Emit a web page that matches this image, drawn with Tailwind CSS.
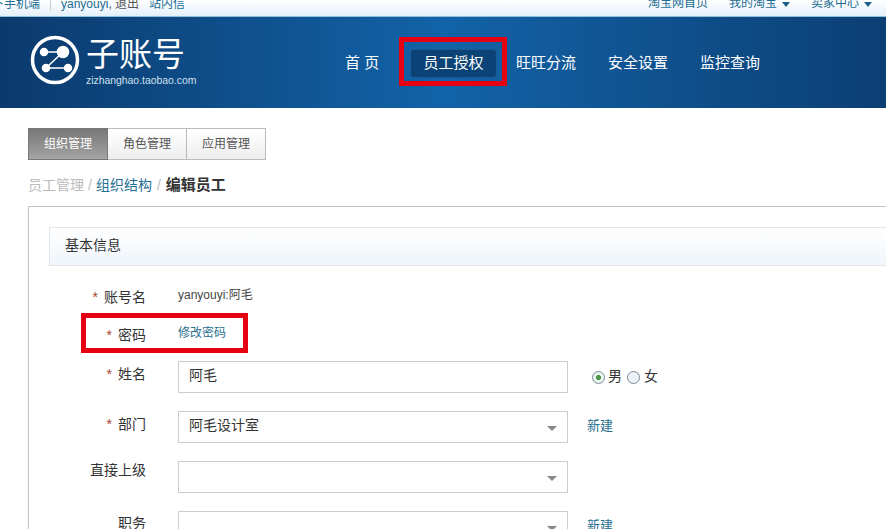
<!DOCTYPE html>
<html lang="zh-CN">
<head>
    <meta charset="UTF-8">
    <title>子账号</title>
    <script src="https://cdn.jsdelivr.net/npm/@tailwindcss/browser@4"></script>
</head>
<body class="relative h-[529px] w-[886px] overflow-hidden bg-white font-['Liberation_Sans','Noto_Sans_CJK_SC',sans-serif] text-[14px] text-[#333]">

    <!-- top bar, cut off by the screenshot -->
    <div class="flex h-[17px] items-end justify-between overflow-hidden border-b border-[#8fc0dc] bg-gradient-to-b from-white to-[#e3f0f8] text-[12px] leading-[16px] text-[#1c6d92]">
        <div class="mb-[4px] ml-[-8px] flex items-center">
            <span>下手机端</span>
            <span class="mx-[10px] h-[14px] w-px bg-[#ccc]"></span>
            <span>yanyouyi</span><span class="text-[#555]">,&nbsp;退出</span>
            <span class="ml-[10px]">站内信</span>
        </div>
        <div class="mb-[5px] mr-[14px] flex items-center gap-[21px]">
            <span>淘宝网首页</span>
            <span class="flex items-center gap-[5px]">我的淘宝<i class="mt-[2px] h-0 w-0 border-x-[4px] border-t-[5px] border-x-transparent border-t-[#1c5f8a]"></i></span>
            <span class="flex items-center gap-[5px]">卖家中心<i class="mt-[2px] h-0 w-0 border-x-[4px] border-t-[5px] border-x-transparent border-t-[#1c5f8a]"></i></span>
        </div>
    </div>

    <!-- header -->
    <div class="flex h-[91px] items-center bg-gradient-to-r from-[#0b3a6d] via-[#1263a8] to-[#0c3f74] pl-[30px]">
        <svg width="50" height="50" viewBox="0 0 50 50" class="mt-[-5px] shrink-0">
            <circle cx="25" cy="25" r="22.5" fill="none" stroke="#fff" stroke-width="3.5"/>
            <g stroke="#fff" stroke-width="1.5" fill="#fff">
                <path d="M14 17H33L16 33H38" fill="none"/>
                <circle cx="14" cy="17" r="3.5"/>
                <circle cx="33" cy="17" r="5.5"/>
                <circle cx="16" cy="33" r="3.5"/>
                <circle cx="38" cy="33" r="3.5"/>
            </g>
        </svg>
        <div class="ml-[6px] mt-[-2px] flex w-[120px] flex-col text-white">
            <span class="text-[33px] leading-[38px] tracking-[0px]">子账号</span>
            <span class="whitespace-nowrap text-[10.4px] leading-[14px] text-[#cfe0ee]">zizhanghao.taobao.com</span>
        </div>
        <nav class="ml-[139px] mt-[1px] flex items-center text-[15px] text-white">
            <span class="w-[65px] whitespace-pre">首 页</span>
            <span class="flex h-[29px] w-[87px] items-center justify-center rounded-[4px] border border-[#1a5a94] bg-[#0c4377]">员工授权</span>
            <span class="ml-[19px]">旺旺分流</span>
            <span class="ml-[32px]">安全设置</span>
            <span class="ml-[32px]">监控查询</span>
        </nav>
    </div>

    <main class="pl-[28px] pt-[20px]">
        <!-- tabs -->
        <div class="flex h-[32px] w-[238px] text-[12px]">
            <div class="flex w-[80px] items-center justify-center border border-[#777] bg-gradient-to-b from-[#777] to-[#a5a5a5] text-white">组织管理</div>
            <div class="flex w-[79px] items-center justify-center border-y border-r border-[#bbb] bg-gradient-to-b from-white to-[#eee] text-[#555]">角色管理</div>
            <div class="flex w-[79px] items-center justify-center border-y border-r border-[#bbb] bg-gradient-to-b from-white to-[#eee] text-[#555]">应用管理</div>
        </div>

        <!-- breadcrumb -->
        <div class="mt-[15px] flex h-[20px] items-center text-[14px] leading-[20px] text-[#bbb]">
            <span>员工管理</span><span class="mx-[4px]">/</span><span class="text-[#1f6f92]">组织结构</span><span class="mx-[5px]">/</span><span class="text-[15px] font-bold text-[#333]">编辑员工</span>
        </div>

        <!-- panel -->
        <div class="mt-[11px] h-[323px] border-l border-t border-[#c4c4c4] pl-[20px] pt-[20px]">
            <div class="flex h-[39px] items-center border border-r-0 border-[#e2e6ea] bg-gradient-to-b from-white to-[#eff5fb] pl-[15px] pb-[2px] text-[14px] text-[#333]">基本信息</div>

            <div class="mt-[20px] flex h-[22px] items-center">
                <label class="w-[97px] text-right"><span class="mr-[6px] text-[#a5442f]">*</span>账号名</label>
                <span class="ml-[32px] mt-[-4px] text-[12px] text-[#444]">yanyouyi:阿毛</span>
            </div>
            <div class="mt-[16px] flex h-[22px] items-center">
                <label class="w-[97px] text-right"><span class="mr-[6px] text-[#a5442f]">*</span>密码</label>
                <span class="ml-[32px] mt-[-4px] text-[12px] text-[#2a6f8f]">修改密码</span>
            </div>

            <div class="mt-[15px] flex h-[32px] items-center">
                <label class="mt-[-6px] w-[97px] text-right"><span class="mr-[6px] text-[#a5442f]">*</span>姓名</label>
                <div class="ml-[32px] flex h-[32px] w-[390px] items-center border border-[#ccc] pb-[4px] pl-[10px]">阿毛</div>
                <span class="ml-[24px] h-[13px] w-[13px] rounded-full border border-[#7a8a99] bg-[radial-gradient(circle,#4c9a4c_0,#4c9a4c_30%,#eef5ee_35%)]"></span>
                <span class="ml-[3px] mt-[-2px]">男</span>
                <span class="ml-[5px] h-[13px] w-[13px] rounded-full border border-[#7a8a99] bg-[#eef2f6]"></span>
                <span class="ml-[4px] mt-[-2px]">女</span>
            </div>
            <div class="mt-[18px] flex h-[32px] items-center">
                <label class="mt-[-6px] w-[97px] text-right"><span class="mr-[6px] text-[#a5442f]">*</span>部门</label>
                <div class="ml-[32px] flex h-[32px] w-[390px] items-center justify-between border border-[#ccc] pl-[10px] pr-[10px]"><span class="mt-[-4px]">阿毛设计室</span><i class="mt-[2px] h-0 w-0 border-x-[5px] border-t-[5px] border-x-transparent border-t-[#888]"></i></div>
                <span class="ml-[19px] mt-[-2px] text-[13px] text-[#2a6f8f]">新建</span>
            </div>
            <div class="mt-[18px] flex h-[32px] items-center">
                <label class="mt-[-14px] w-[97px] text-right">直接上级</label>
                <div class="ml-[32px] flex h-[32px] w-[390px] items-center justify-end border border-[#ccc] pr-[10px]"><i class="mt-[2px] h-0 w-0 border-x-[5px] border-t-[5px] border-x-transparent border-t-[#888]"></i></div>
            </div>
            <div class="mt-[18px] flex h-[32px] items-center">
                <label class="mt-[-8px] w-[97px] text-right">职务</label>
                <div class="ml-[32px] flex h-[32px] w-[390px] items-center justify-end border border-[#ccc] pr-[10px]"><i class="mt-[2px] h-0 w-0 border-x-[5px] border-t-[5px] border-x-transparent border-t-[#888]"></i></div>
                <span class="ml-[19px] mt-[-2px] text-[13px] text-[#2a6f8f]">新建</span>
            </div>
        </div>
    </main>

    <!-- red annotation boxes drawn over the screenshot -->
    <div class="absolute left-[399px] top-[37px] h-[49px] w-[108px] border-[5px] border-[#e60012]"></div>
    <div class="absolute left-[81px] top-[313px] h-[40px] w-[167px] border-[5px] border-[#e60012]"></div>
</body>
</html>
